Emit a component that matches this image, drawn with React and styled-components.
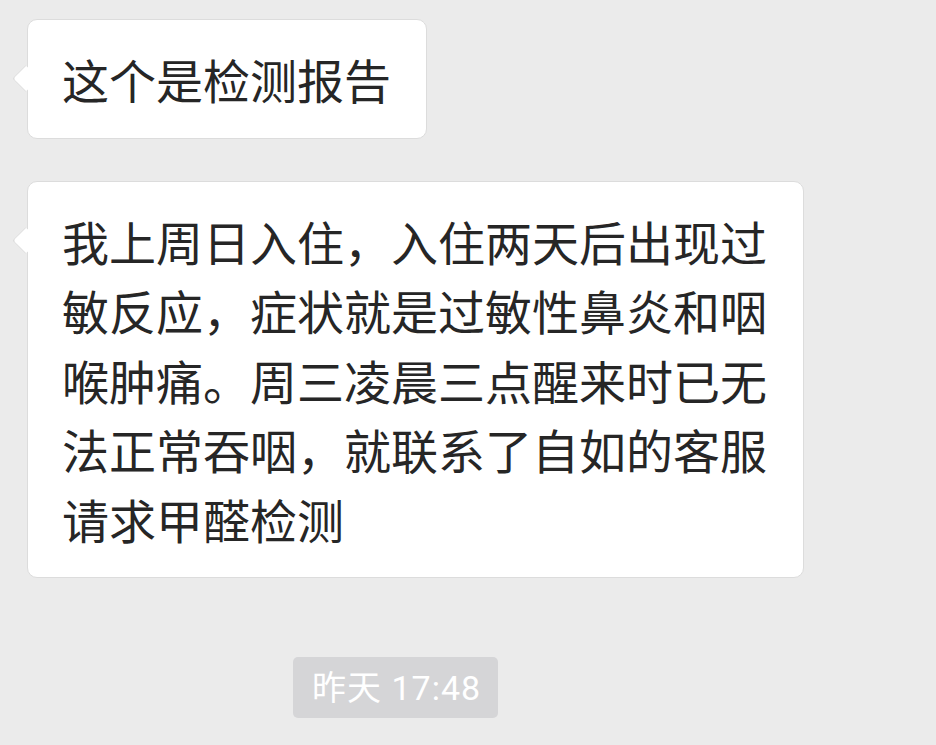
import React from 'react'
import styled, { createGlobalStyle } from 'styled-components'

const GlobalStyle = createGlobalStyle`
  html, body {
    margin: 0;
    padding: 0;
    background: #ebebeb;
  }
  body {
    font-family: "Noto Sans CJK SC", "Noto Sans", sans-serif;
  }
`

const Chat = styled.div`
  width: 936px;
  height: 745px;
  box-sizing: border-box;
  padding: 19px 0 0 27px;
  display: flex;
  flex-direction: column;
  align-items: flex-start;
  background: #ebebeb;
  overflow: hidden;
`

const Bubble = styled.div`
  position: relative;
  box-sizing: border-box;
  max-width: 777px;
  margin-top: ${(p) => p.$gap || 0}px;
  padding: 24px 35px 24px 34px;
  background: #fff;
  border: 1px solid #dcdcdc;
  border-radius: 10px;
  color: #262626;
  font-size: 47px;
  font-weight: 400;
  line-height: 69.5px;

  &::before {
    content: '';
    position: absolute;
    left: -12px;
    top: 49px;
    width: 18px;
    height: 18px;
    background: #fff;
    border-left: 1px solid #dcdcdc;
    border-bottom: 1px solid #dcdcdc;
    transform: rotate(45deg);
    border-radius: 0 0 0 3px;
  }
`

const TimeRow = styled.div`
  margin-top: 79px;
  padding-left: 266px;
`

const Stamp = styled.div`
  display: inline-block;
  height: 61px;
  padding: 0 17px 0 19px;
  line-height: 62px;
  background: #d5d5d7;
  border-radius: 5px;
  color: #fff;
  font-family: Roboto, "Noto Sans CJK SC", sans-serif;
  font-size: 34px;
  letter-spacing: 1px;
`

const App = () => {
  return (
    <>
      <GlobalStyle />
      <Chat>
        <Bubble>这个是检测报告</Bubble>
        <Bubble $gap={42}>
          我上周日入住，入住两天后出现过敏反应，症状就是过敏性鼻炎和咽喉肿痛。周三凌晨三点醒来时已无法正常吞咽，就联系了自如的客服请求甲醛检测
        </Bubble>
        <TimeRow>
          <Stamp>昨天 17:48</Stamp>
        </TimeRow>
      </Chat>
    </>
  )
}

export default App
